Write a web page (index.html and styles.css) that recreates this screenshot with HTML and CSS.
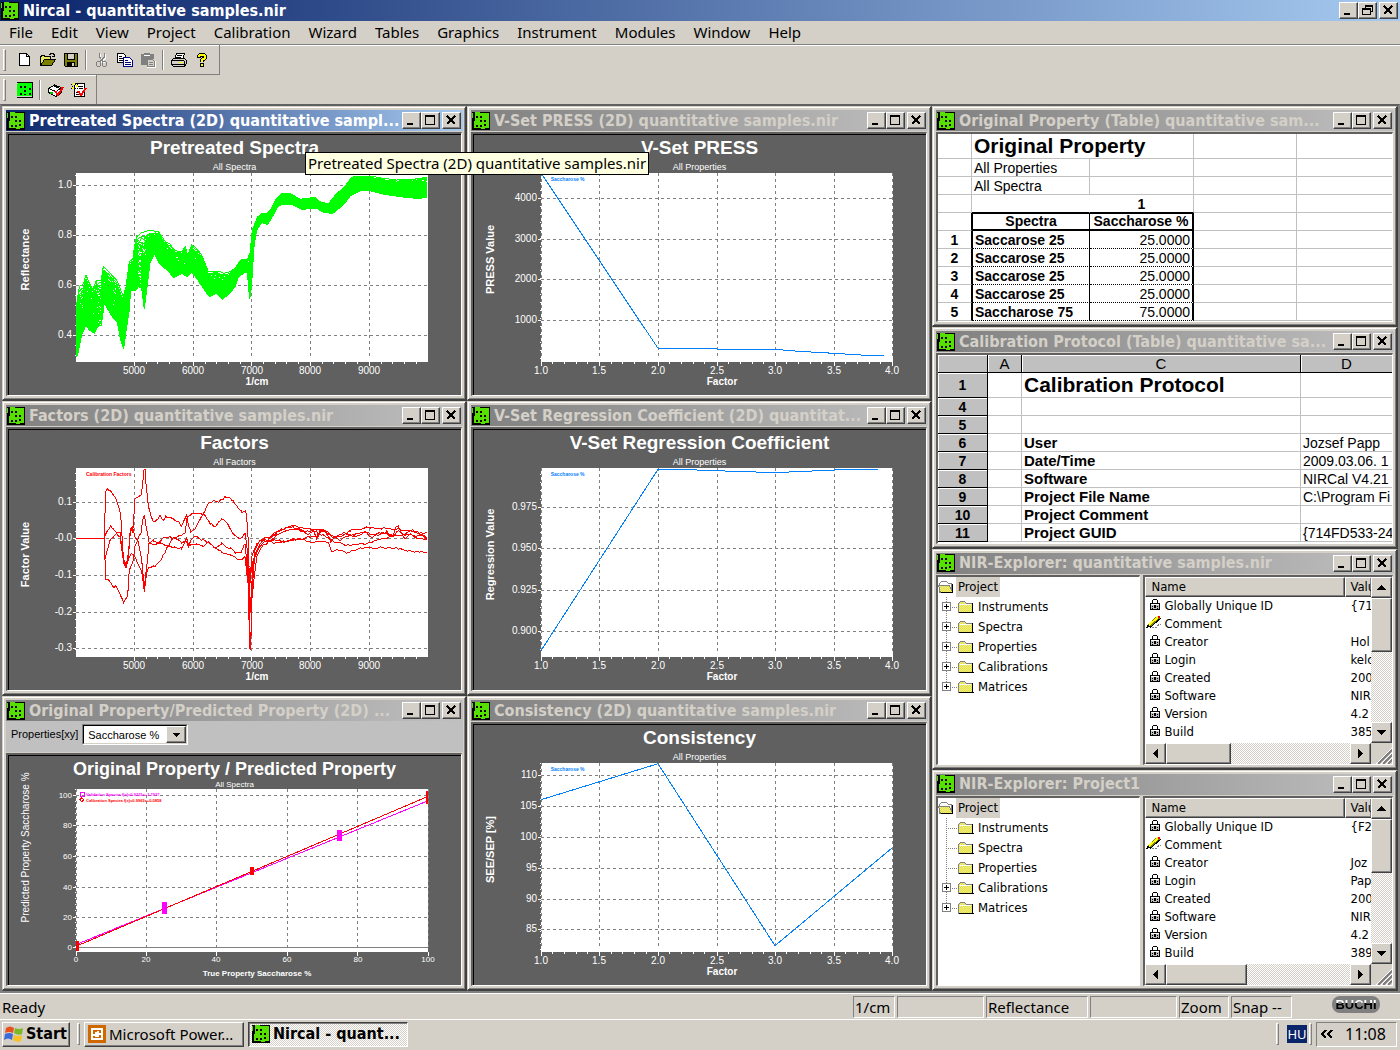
FILE: index.html
```html
<!DOCTYPE html>
<html lang="en">
<head>
<meta charset="utf-8">
<title>Nircal - quantitative samples.nir</title>
<link rel="stylesheet" href="styles.css">
</head>
<body>
<svg class="defs" aria-hidden="true">
  <defs>
    <pattern id="dither" width="2" height="2" patternUnits="userSpaceOnUse"><rect width="2" height="2" fill="#ffff00"/><rect width="1" height="1" fill="#d4d0c8"/><rect x="1" y="1" width="1" height="1" fill="#d4d0c8"/></pattern>
    <pattern id="ditheralt" width="2" height="2" patternUnits="userSpaceOnUse"><rect width="2" height="2" fill="#d4d0c8"/><rect width="1" height="1" fill="#ffff00"/><rect x="1" y="1" width="1" height="1" fill="#ffff00"/></pattern>
  </defs>
  <symbol id="app" viewBox="0 0 18 18"><path fill="#000" d="M0 0h18v18H0z"/><path fill="#55e000" d="M3 0h5v1h9v15h-4v1H9v-1H2V9h1z M0 1h1v5H0z"/><path fill="#000" d="M4 4h2v2H4zM8 4h2v2H8zM8 8h2v2H8zM12 8h2v2h-2zM4 13h2v2H4zM8 13h2v2H8zM12 12h2v2h-2z"/></symbol>
  <symbol id="chip" viewBox="0 0 16 16"><path fill="#000" d="M0 0h16v1H0zM0 15h16v1H0zM15 1h1v14h-1z"/><path fill="#00ff00" d="M1 1h14v13H0V2h1z"/><path fill="#000" d="M3 4h2v2H3zM7 4h2v2H7zM7 8h2v2H7zM12 6h2v2h-2zM3 11h2v2H3zM7 12h2v1H7zM12 11h2v2h-2z"/></symbol>
  <symbol id="new" viewBox="0 0 16 16"><path fill="#fff" stroke="#000" d="M2.500 1.500h7l3 3v9h-10z"/><path fill="none" stroke="#000" d="M9.500 1.500v3h3"/></symbol>
  <symbol id="open" viewBox="0 0 16 16"><path fill="url(#dither)" stroke="#000" d="M.5 13.500v-9h1v-1h3v1h6v3h-6z"/><path fill="#808000" stroke="#000" d="M.5 13.500l4-6h11l-4 6z"/><path fill="none" stroke="#000" d="M9 2.500h1v-1h3v1h1v2M12 4.500h3"/></symbol>
  <symbol id="save" viewBox="0 0 16 16"><path fill="#808000" stroke="#000" d="M1.500 1.500h13v13h-12l-1-1z"/><path fill="#d4d0c8" stroke="#000" d="M4.500 1.500h7v6h-7z"/><path fill="#000" d="M4 10h8v5H4z"/><path fill="#d4d0c8" d="M9 11h2v3H9z"/></symbol>
  <symbol id="cut" viewBox="0 0 16 16"><g fill="none"><path stroke="#fff" d="M6.500 2v4l4 5M11.500 2v4l-5 5"/><path stroke="#808080" d="M5.500 1v4l4 5M10.500 1v4l-5 5"/><ellipse cx="4.500" cy="12" rx="2" ry="2.500" stroke="#808080"/><ellipse cx="10.500" cy="12" rx="2" ry="2.500" stroke="#808080"/></g></symbol>
  <symbol id="copy" viewBox="0 0 16 16"><path fill="#fff" stroke="#000" d="M.5 1.500h6l2 2v7h-8z"/><path stroke="#000" d="M2 4.500h3M2 6.500h4M2 8.500h4"/><path fill="#fff" stroke="#000080" d="M6.500 5.500h6l3 3v6h-9z"/><path stroke="#000080" d="M8 8.500h3M8 10.500h6M8 12.500h6"/></symbol>
  <symbol id="paste" viewBox="0 0 16 16"><path fill="#808080" d="M1 2h3V1h6v1h4v5h-1v6H1z"/><path stroke="#fff" d="M4 3.500h6"/><path fill="#d4d0c8" stroke="#808080" d="M7.500 7.500h5l2 2v5h-7z"/><path stroke="#808080" d="M9 10.500h4M9 12.500h4"/><path fill="none" stroke="#fff" d="M7 15.500h8.500V9"/></symbol>
  <symbol id="print" viewBox="0 0 16 16"><path fill="#fff" stroke="#000" d="M5.500 1.500h8l-2 6h-8z"/><path stroke="#000" d="M6 3.500h5M5 5.500h5"/><path fill="#d4d0c8" stroke="#000" d="M.5 8.500l2-2h11l2 2v3l-2 3H2.500l-2-2z"/><path stroke="#000" d="M1 8.500h12M1 12.500h12M13.500 9v5"/><path fill="#ffff00" d="M8 10h4v1H8z"/></symbol>
  <symbol id="help" viewBox="0 0 16 16"><path fill="none" stroke="#000" stroke-width="4" d="M5 6V4l1-1h4l1 1v2L8 8v2"/><path fill="#000" d="M6 11h4v4H6z"/><path fill="none" stroke="#ffff00" stroke-width="2" d="M5 5V4l1-1h4l1 1v2L8 8v2"/><path fill="#ffff00" d="M7 12h2v2H7z"/></symbol>
  <symbol id="boxcheck" viewBox="0 0 16 16"><path fill="#fff" stroke="#000" d="M.5 6.500L6.500 3l7 2.500v5L8 14.500l-7.500-4z"/><path fill="none" stroke="#000" d="M.5 6.500L8 9.500l5.500-4M8 9.500v5M6 4l6 2.500"/><path fill="#00c000" d="M2 10h3v2H2z"/><path fill="none" stroke="#ff0000" stroke-width="2" d="M7 9l3 4 5-8"/></symbol>
  <symbol id="formcheck" viewBox="0 0 16 16"><path fill="#fff" stroke="#000" d="M3.500 1.500h10v13h-10z"/><path stroke="#000" d="M8 4.500h4M8 6.500h4M5 10.500h3M5 12.500h4"/><path stroke="#000" stroke-dasharray="1 1" d="M0 2.500h8M1 4.500h7M0 6.500h8"/><path fill="#ffff00" d="M2 1h2v2H2zM5 3h2v2H5zM1 5h2v2H1z"/><path fill="none" stroke="#ff0000" stroke-width="2" d="M7 9l3 4 5-7"/></symbol>
  <symbol id="min" viewBox="0 0 15 13"><path fill="#000" d="M3 9h6v2H3z"/></symbol>
  <symbol id="max" viewBox="0 0 15 13"><path fill="#000" fill-rule="evenodd" d="M2 1h10v10H2zM3 3h8v7H3z"/></symbol>
  <symbol id="restore" viewBox="0 0 15 13"><path fill="#000" fill-rule="evenodd" d="M5 1h8v7h-2v3H2V4h3zM6 3v1h5v3h1V3zM3 6h7v4H3z"/></symbol>
  <symbol id="close" viewBox="0 0 15 13"><path fill="none" stroke="#000" stroke-width="2" d="M3 2l8 8M11 2l-8 8"/></symbol>
  <symbol id="folder" viewBox="0 0 16 14"><path fill="url(#dither)" stroke="#808080" d="M.5 12.500v-9l2-2h4l2 2h6v9z"/><path fill="none" stroke="#000" d="M1 12.500h14.500M14.500 3v9.500"/><path stroke="#fff" d="M2 4.500h11"/></symbol>
  <symbol id="folderopen" viewBox="0 0 16 14"><path fill="#fff" stroke="#808080" d="M1.500 12.500v-9l2-2h5l2 2h3v9z"/><path fill="url(#ditheralt)" stroke="#808080" d="M.5 5.500h11l3 7h-12z"/><path fill="none" stroke="#000" d="M3 12.500h12M14.500 4v9"/></symbol>
  <symbol id="lock" viewBox="0 0 12 13"><path fill="none" stroke="#000" d="M3.500 6V2.500l1-1h3l1 1V6"/><path fill="#c0c0c0" stroke="#000" d="M1.500 5.500h9v6h-9z"/><path stroke="#fff" d="M2 6.500h8"/><path fill="#000" d="M5 7h2v3H5zM3 8h1v1H3zM8 8h1v1H8zM3 10h1v1H3zM8 10h1v1H8z"/></symbol>
  <symbol id="pencil" viewBox="0 0 16 14"><path stroke="#808000" stroke-width="4" d="M3 11l10-9"/><path stroke="#ffff00" stroke-width="2" d="M3 10l9-8"/><path stroke="#000" d="M4 12.500L15 3"/><path fill="#ff0000" d="M12 1h2v2h-2z"/><path fill="#000" d="M0 13l2-4 2 3z"/><path fill="none" stroke="#808080" stroke-dasharray="2 1" d="M6 12.500h4l3-3h2"/></symbol>
  <symbol id="plus" viewBox="0 0 9 9"><path fill="#fff" stroke="#808080" d="M.5.5h8v8h-8z"/><path stroke="#000" d="M2 4.500h5M4.500 2v5"/></symbol>
  <symbol id="up" viewBox="0 0 9 5"><path d="M0 5h9L4.500 0z"/></symbol>
  <symbol id="down" viewBox="0 0 9 5"><path d="M0 0h9L4.500 5z"/></symbol>
  <symbol id="left" viewBox="0 0 5 9"><path d="M5 0v9L0 4.500z"/></symbol>
  <symbol id="right" viewBox="0 0 5 9"><path d="M0 0v9l5-4.500z"/></symbol>
  <symbol id="grip" viewBox="0 0 19 19"><g fill="none"><path stroke="#808080" stroke-width="2" d="M5 19L19 5M10 19l9-9M15 19l4-4"/><path stroke="#fff" d="M3 19L19 3M8 19L19 8M13 19l6-6"/></g></symbol>
</svg>

<header class="titlebar active main-title">
  <svg class="app-icon"><use href="#app"/></svg><h1 class="caption">Nircal - quantitative samples.nir</h1>
  <button class="wbtn" aria-label="Minimize"><svg><use href="#min"/></svg></button><button class="wbtn" aria-label="Restore"><svg><use href="#restore"/></svg></button><button class="wbtn close" aria-label="Close"><svg><use href="#close"/></svg></button>
</header>

<nav class="menu">
  <button>File</button><button>Edit</button><button>View</button><button>Project</button><button>Calibration</button><button>Wizard</button><button>Tables</button><button>Graphics</button><button>Instrument</button><button>Modules</button><button>Window</button><button>Help</button>
</nav>

<div class="toolbar">
  <i class="handle"></i>
  <button aria-label="New"><svg><use href="#new"/></svg></button><button aria-label="Open"><svg><use href="#open"/></svg></button><button aria-label="Save"><svg><use href="#save"/></svg></button>
  <i class="sep"></i>
  <button aria-label="Cut"><svg><use href="#cut"/></svg></button><button aria-label="Copy"><svg><use href="#copy"/></svg></button><button aria-label="Paste"><svg><use href="#paste"/></svg></button>
  <i class="sep"></i>
  <button aria-label="Print"><svg><use href="#print"/></svg></button><button aria-label="Help"><svg><use href="#help"/></svg></button>
</div>
<div class="toolbar second">
  <i class="handle"></i>
  <button aria-label="Project"><svg><use href="#chip"/></svg></button>
  <i class="sep"></i>
  <button aria-label="Check instrument"><svg><use href="#boxcheck"/></svg></button><button aria-label="Check form"><svg><use href="#formcheck"/></svg></button>
</div>

<main class="mdi">
  <div class="column">
    <section class="window">
      <header class="titlebar active"><svg class="app-icon"><use href="#app"/></svg><h2 class="caption">Pretreated Spectra (2D) quantitative sampl...</h2><button class="wbtn" aria-label="Minimize"><svg><use href="#min"/></svg></button><button class="wbtn" aria-label="Maximize"><svg><use href="#max"/></svg></button><button class="wbtn close" aria-label="Close"><svg><use href="#close"/></svg></button></header>
      <div class="client chart" data-chart="spectra"></div>
    </section>
    <section class="window">
      <header class="titlebar"><svg class="app-icon"><use href="#app"/></svg><h2 class="caption">Factors (2D) quantitative samples.nir</h2><button class="wbtn" aria-label="Minimize"><svg><use href="#min"/></svg></button><button class="wbtn" aria-label="Maximize"><svg><use href="#max"/></svg></button><button class="wbtn close" aria-label="Close"><svg><use href="#close"/></svg></button></header>
      <div class="client chart" data-chart="factors"></div>
    </section>
    <section class="window">
      <header class="titlebar"><svg class="app-icon"><use href="#app"/></svg><h2 class="caption">Original Property/Predicted Property (2D) ...</h2><button class="wbtn" aria-label="Minimize"><svg><use href="#min"/></svg></button><button class="wbtn" aria-label="Maximize"><svg><use href="#max"/></svg></button><button class="wbtn close" aria-label="Close"><svg><use href="#close"/></svg></button></header>
      <div class="options"><label for="prop">Properties[xy]</label><span class="combo"><select id="prop"><option>Saccharose %</option></select><span class="arrow"><svg><use href="#down"/></svg></span></span></div>
      <div class="client chart" data-chart="predicted"></div>
    </section>
  </div>

  <div class="column">
    <section class="window">
      <header class="titlebar"><svg class="app-icon"><use href="#app"/></svg><h2 class="caption">V-Set PRESS (2D) quantitative samples.nir</h2><button class="wbtn" aria-label="Minimize"><svg><use href="#min"/></svg></button><button class="wbtn" aria-label="Maximize"><svg><use href="#max"/></svg></button><button class="wbtn close" aria-label="Close"><svg><use href="#close"/></svg></button></header>
      <div class="client chart" data-chart="press"></div>
    </section>
    <section class="window">
      <header class="titlebar"><svg class="app-icon"><use href="#app"/></svg><h2 class="caption">V-Set Regression Coefficient (2D) quantitat...</h2><button class="wbtn" aria-label="Minimize"><svg><use href="#min"/></svg></button><button class="wbtn" aria-label="Maximize"><svg><use href="#max"/></svg></button><button class="wbtn close" aria-label="Close"><svg><use href="#close"/></svg></button></header>
      <div class="client chart" data-chart="regression"></div>
    </section>
    <section class="window">
      <header class="titlebar"><svg class="app-icon"><use href="#app"/></svg><h2 class="caption">Consistency (2D) quantitative samples.nir</h2><button class="wbtn" aria-label="Minimize"><svg><use href="#min"/></svg></button><button class="wbtn" aria-label="Maximize"><svg><use href="#max"/></svg></button><button class="wbtn close" aria-label="Close"><svg><use href="#close"/></svg></button></header>
      <div class="client chart" data-chart="consistency"></div>
    </section>
  </div>

  <div class="column">
    <section class="window">
      <header class="titlebar"><svg class="app-icon"><use href="#app"/></svg><h2 class="caption">Original Property (Table) quantitative sam...</h2><button class="wbtn" aria-label="Minimize"><svg><use href="#min"/></svg></button><button class="wbtn" aria-label="Maximize"><svg><use href="#max"/></svg></button><button class="wbtn close" aria-label="Close"><svg><use href="#close"/></svg></button></header>
      <div class="client">
        <table class="sheet props">
          <colgroup><col class="c-idx"><col class="c-name"><col class="c-val"><col class="c-extra"><col></colgroup>
          <tr class="big"><td></td><th colspan="2">Original Property</th><td></td><td></td></tr>
          <tr><td></td><td>All Properties</td><td></td><td></td><td></td></tr>
          <tr><td></td><td>All Spectra</td><td></td><td></td><td></td></tr>
          <tr class="above"><td></td><td class="open"></td><th class="mid">1</th><td></td><td></td></tr>
          <tr class="head"><td class="idx"></td><th>Spectra</th><th>Saccharose %</th><td></td><td></td></tr>
          <tr class="data"><th class="idx">1</th><th>Saccarose 25</th><td>25.0000</td><td></td><td></td></tr>
          <tr class="data"><th class="idx">2</th><th>Saccarose 25</th><td>25.0000</td><td></td><td></td></tr>
          <tr class="data"><th class="idx">3</th><th>Saccarose 25</th><td>25.0000</td><td></td><td></td></tr>
          <tr class="data"><th class="idx">4</th><th>Saccarose 25</th><td>25.0000</td><td></td><td></td></tr>
          <tr class="data"><th class="idx">5</th><th>Saccharose 75</th><td>75.0000</td><td></td><td></td></tr>
        </table>
      </div>
    </section>
    <section class="window">
      <header class="titlebar"><svg class="app-icon"><use href="#app"/></svg><h2 class="caption">Calibration Protocol (Table) quantitative sa...</h2><button class="wbtn" aria-label="Minimize"><svg><use href="#min"/></svg></button><button class="wbtn" aria-label="Maximize"><svg><use href="#max"/></svg></button><button class="wbtn close" aria-label="Close"><svg><use href="#close"/></svg></button></header>
      <div class="client">
        <table class="sheet protocol">
          <colgroup><col class="c-row"><col class="c-a"><col class="c-c"><col></colgroup>
          <tr><th class="hd"></th><th class="hd">A</th><th class="hd">C</th><th class="hd last">D</th></tr>
          <tr class="big"><th class="hd">1</th><td></td><th>Calibration Protocol</th><td></td></tr>
          <tr><th class="hd">4</th><td></td><th></th><td></td></tr>
          <tr><th class="hd">5</th><td></td><th></th><td></td></tr>
          <tr><th class="hd">6</th><td></td><th>User</th><td>Jozsef Papp</td></tr>
          <tr><th class="hd">7</th><td></td><th>Date/Time</th><td>2009.03.06. 1</td></tr>
          <tr><th class="hd">8</th><td></td><th>Software</th><td>NIRCal V4.21</td></tr>
          <tr><th class="hd">9</th><td></td><th>Project File Name</th><td>C:\Program Fi</td></tr>
          <tr><th class="hd">10</th><td></td><th>Project Comment</th><td></td></tr>
          <tr><th class="hd">11</th><td></td><th>Project GUID</th><td>{714FD533-24</td></tr>
        </table>
      </div>
    </section>
    <section class="window">
      <header class="titlebar"><svg class="app-icon"><use href="#app"/></svg><h2 class="caption">NIR-Explorer: quantitative samples.nir</h2><button class="wbtn" aria-label="Minimize"><svg><use href="#min"/></svg></button><button class="wbtn" aria-label="Maximize"><svg><use href="#max"/></svg></button><button class="wbtn close" aria-label="Close"><svg><use href="#close"/></svg></button></header>
      <div class="explorer">
        <ul class="tree">
          <li class="root"><svg class="folder"><use href="#folderopen"/></svg><span class="selected">Project</span></li>
          <li><i class="stem"><svg class="plus"><use href="#plus"/></svg></i><svg class="folder"><use href="#folder"/></svg><span>Instruments</span></li>
          <li><i class="stem"><svg class="plus"><use href="#plus"/></svg></i><svg class="folder"><use href="#folder"/></svg><span>Spectra</span></li>
          <li><i class="stem"><svg class="plus"><use href="#plus"/></svg></i><svg class="folder"><use href="#folder"/></svg><span>Properties</span></li>
          <li><i class="stem"><svg class="plus"><use href="#plus"/></svg></i><svg class="folder"><use href="#folder"/></svg><span>Calibrations</span></li>
          <li><i class="stem"><svg class="plus"><use href="#plus"/></svg></i><svg class="folder"><use href="#folder"/></svg><span>Matrices</span></li>
        </ul>
        <div class="listview">
          <div class="listbody"><table class="list">
            <colgroup><col class="c-prop"><col></colgroup>
            <tr><th>Name</th><th>Valu</th></tr>
            <tr><td><svg class="lock"><use href="#lock"/></svg>Globally Unique ID</td><td>{71</td></tr>
            <tr><td><svg class="pencil"><use href="#pencil"/></svg>Comment</td><td></td></tr>
            <tr><td><svg class="lock"><use href="#lock"/></svg>Creator</td><td>Hol</td></tr>
            <tr><td><svg class="lock"><use href="#lock"/></svg>Login</td><td>kelc</td></tr>
            <tr><td><svg class="lock"><use href="#lock"/></svg>Created</td><td>200</td></tr>
            <tr><td><svg class="lock"><use href="#lock"/></svg>Software</td><td>NIR</td></tr>
            <tr><td><svg class="lock"><use href="#lock"/></svg>Version</td><td>4.2</td></tr>
            <tr><td><svg class="lock"><use href="#lock"/></svg>Build</td><td>385</td></tr>
          </table></div>
          <div class="vscroll"><button class="sbtn" aria-label="Scroll up"><svg class="tri"><use href="#up"/></svg></button><i class="thumb"></i><button class="sbtn end" aria-label="Scroll down"><svg class="tri"><use href="#down"/></svg></button></div>
          <div class="hscroll"><button class="sbtn" aria-label="Scroll left"><svg class="tri side"><use href="#left"/></svg></button><i class="thumb"></i><button class="sbtn end" aria-label="Scroll right"><svg class="tri side"><use href="#right"/></svg></button></div>
          <svg class="grip"><use href="#grip"/></svg>
        </div>
      </div>
    </section>
    <section class="window">
      <header class="titlebar"><svg class="app-icon"><use href="#app"/></svg><h2 class="caption">NIR-Explorer: Project1</h2><button class="wbtn" aria-label="Minimize"><svg><use href="#min"/></svg></button><button class="wbtn" aria-label="Maximize"><svg><use href="#max"/></svg></button><button class="wbtn close" aria-label="Close"><svg><use href="#close"/></svg></button></header>
      <div class="explorer">
        <ul class="tree">
          <li class="root"><svg class="folder"><use href="#folderopen"/></svg><span class="selected">Project</span></li>
          <li><i class="stem leaf"></i><svg class="folder"><use href="#folder"/></svg><span>Instruments</span></li>
          <li><i class="stem leaf"></i><svg class="folder"><use href="#folder"/></svg><span>Spectra</span></li>
          <li><i class="stem leaf"></i><svg class="folder"><use href="#folder"/></svg><span>Properties</span></li>
          <li><i class="stem"><svg class="plus"><use href="#plus"/></svg></i><svg class="folder"><use href="#folder"/></svg><span>Calibrations</span></li>
          <li><i class="stem"><svg class="plus"><use href="#plus"/></svg></i><svg class="folder"><use href="#folder"/></svg><span>Matrices</span></li>
        </ul>
        <div class="listview">
          <div class="listbody"><table class="list">
            <colgroup><col class="c-prop"><col></colgroup>
            <tr><th>Name</th><th>Valu</th></tr>
            <tr><td><svg class="lock"><use href="#lock"/></svg>Globally Unique ID</td><td>{F2</td></tr>
            <tr><td><svg class="pencil"><use href="#pencil"/></svg>Comment</td><td></td></tr>
            <tr><td><svg class="lock"><use href="#lock"/></svg>Creator</td><td>Joz</td></tr>
            <tr><td><svg class="lock"><use href="#lock"/></svg>Login</td><td>Pap</td></tr>
            <tr><td><svg class="lock"><use href="#lock"/></svg>Created</td><td>200</td></tr>
            <tr><td><svg class="lock"><use href="#lock"/></svg>Software</td><td>NIR</td></tr>
            <tr><td><svg class="lock"><use href="#lock"/></svg>Version</td><td>4.2</td></tr>
            <tr><td><svg class="lock"><use href="#lock"/></svg>Build</td><td>389</td></tr>
          </table></div>
          <div class="vscroll"><button class="sbtn" aria-label="Scroll up"><svg class="tri"><use href="#up"/></svg></button><i class="thumb"></i><button class="sbtn end" aria-label="Scroll down"><svg class="tri"><use href="#down"/></svg></button></div>
          <div class="hscroll"><button class="sbtn" aria-label="Scroll left"><svg class="tri side"><use href="#left"/></svg></button><i class="thumb wide"></i><button class="sbtn end" aria-label="Scroll right"><svg class="tri side"><use href="#right"/></svg></button></div>
          <svg class="grip"><use href="#grip"/></svg>
        </div>
      </div>
    </section>
  </div>
  <div class="tooltip" role="tooltip">Pretreated Spectra (2D) quantitative samples.nir</div>
</main>

<div class="status">
  <span class="ready">Ready</span>
  <span class="cell w-unit">1/cm</span><span class="cell w-blank"></span><span class="cell w-mode">Reflectance</span><span class="cell w-blank"></span><span class="cell w-zoom">Zoom</span><span class="cell w-snap">Snap --</span>
  <span class="brand"><b>BUCHI</b></span>
</div>

<footer class="taskbar">
  <button class="start"><svg class="flag" viewBox="0 0 20 20"><path fill="#e8501c" d="M2 4q4-3 8 0L9 9Q5 7 1 9z"/><path fill="#7ab828" d="M11 4q4 2 8 0l-1 6q-4 2-8-1z"/><path fill="#3c6cd8" d="M1 10q4-2 8 0l-1 6q-4-3-8 0z"/><path fill="#f8c020" d="M10 11q4 2 8 0l-1 6q-4 2-8-1z"/></svg>Start</button>
  <i class="divider"></i>
  <button class="task"><svg class="task-icon" viewBox="0 0 18 18"><path fill="#d06800" d="M0 0h18v18H0z"/><path fill="none" stroke="#fff" stroke-width="2" d="M4 4h10v10H4z"/><path fill="#fff" d="M9 6h2v2h2v2h-2v2H7v-1H5V9h2V7h2z"/></svg>Microsoft Power...</button>
  <button class="task pressed"><svg class="task-icon"><use href="#app"/></svg>Nircal - quant...</button>
  <span class="spring"></span>
  <i class="divider"></i>
  <span class="lang">HU</span>
  <i class="divider"></i>
  <div class="tray"><svg class="chevrons" viewBox="0 0 12 8"><path fill="none" stroke="#000" stroke-width="2" d="M5 0L1 4l4 4M11 0L7 4l4 4"/></svg><time>11:08</time></div>
</footer>
<script src="charts.js"></script>
</body>
</html>
```
FILE: styles.css
```css
* { box-sizing: border-box; }
html, body { height: 100%; }
body { margin: 0; display: flex; flex-direction: column; overflow: hidden; background: #d4d0c8; color: #000; font: 15px/20px "Noto Sans", sans-serif; }
button { margin: 0; padding: 0; border: 0; background: none; color: inherit; font: inherit; }
svg { display: block; flex: none; shape-rendering: crispEdges; }
.defs { position: absolute; width: 0; height: 0; }

/* caption bars */
.titlebar { display: flex; align-items: center; flex: none; height: 21px; padding: 0 2px 0 1px; background: linear-gradient(90deg, #808080, #c0c0c0); color: #d4d0c8; }
.titlebar.active { background: linear-gradient(90deg, #0a246a, #a6caf0); color: #fff; }
.app-icon { width: 18px; height: 18px; }
.caption { flex: 1; min-width: 0; margin: 0 0 0 4px; overflow: hidden; white-space: nowrap; font: bold 16px/22px "DejaVu Sans Condensed", "DejaVu Sans", sans-serif; }
.wbtn { width: 19px; height: 17px; flex: none; background: #d4d0c8; border: 1px solid; border-color: #fff #404040 #404040 #fff; box-shadow: inset -1px -1px #808080; }
.wbtn svg { width: 15px; height: 13px; margin: 1px; }
.wbtn.close { margin-left: 2px; }

.menu { display: flex; flex: none; height: 23px; box-shadow: 0 1px #808080, 0 2px #fff; }
.menu button { padding: 0 9px; line-height: 20px; height: 21px; }

.toolbar { display: flex; align-items: center; align-self: flex-start; flex: none; height: 31px; padding: 0 6px 0 3px; border: solid #808080; border-width: 1px 1px 1px 0; box-shadow: inset 0 1px #fff; }
.toolbar.second { height: 29px; border-width: 0 1px 0 0; }
.toolbar button { width: 23px; height: 22px; display: grid; place-items: center; }
.toolbar svg { width: 16px; height: 16px; }
.handle { width: 3px; height: 22px; margin-right: 7px; background: #d4d0c8; border: 1px solid; border-color: #fff #808080 #808080 #fff; }
.sep { width: 2px; height: 20px; margin: 0 3px; border-left: 1px solid #808080; border-right: 1px solid #fff; }

/* child windows */
.mdi { position: relative; flex: 1; min-height: 0; display: grid; grid-template-columns: 465fr 465fr 466fr; border: 2px solid #808080; border-top-color: #606060; background: #808080; }
.column { display: flex; flex-direction: column; min-width: 0; min-height: 0; }
.window { flex: 1 1 0; min-height: 0; display: flex; flex-direction: column; padding: 3px 2px 2px 3px; background: #d4d0c8; border: 1px solid; border-color: #d4d0c8 #404040 #404040 #d4d0c8; border-right-width: 2px; border-bottom-width: 2px; box-shadow: inset 1px 1px #fff, inset -1px -1px #808080; }
.client { flex: 1; min-height: 0; margin: 1px 1px 1px 0; overflow: hidden; background: #fff; border: solid; border-width: 2px 1px 1px 2px; border-color: #606060 #fff #fff #606060; }
.chart { background: #606060; box-shadow: inset 1px 1px #000; }
.chart svg { width: 100%; height: 100%; }
.chart text { font-family: "Liberation Sans", Arial, sans-serif; fill: #fff; }

.options { display: flex; align-items: flex-start; flex: none; height: 31px; gap: 4px; padding: 3px 5px 0; background: #c0c0c0; font: 11px/20px "Liberation Sans", Arial, sans-serif; }
.combo { position: relative; display: flex; width: 106px; height: 21px; border: 1px solid; border-color: #808080 #fff #fff #808080; }
.combo select { appearance: none; width: 100%; padding: 0 0 0 4px; border: 1px solid; border-color: #000 #d4d0c8 #d4d0c8 #000; border-radius: 0; background: #fff; color: #000; font: 11px/16px "Liberation Sans", Arial, sans-serif; }
.arrow { position: absolute; top: 1px; right: 1px; bottom: 1px; width: 20px; display: grid; place-items: center; pointer-events: none; background: #d4d0c8; border: 1px solid; border-color: #fff #404040 #404040 #fff; box-shadow: inset -1px -1px #808080; }
.arrow svg { width: 7px; height: 4px; }

/* spreadsheets */
.sheet { width: 100%; table-layout: fixed; border-collapse: separate; border-spacing: 0; font: 14px/16px "Liberation Sans", Arial, sans-serif; }
.sheet td, .sheet th { height: 18px; padding: 0 2px; overflow: hidden; white-space: nowrap; text-align: left; border: solid #c0c0c0; border-width: 0 1px 1px 0; }
.protocol th { font-size: 15px; }
.sheet .big td, .sheet .big th { height: 25px; }
.sheet .big th:not(.hd) { font-size: 21px; line-height: 24px; }
.sheet tr > :last-child { border-right-width: 0; }
.c-idx { width: 34px; }
.c-name { width: 118px; }
.c-val { width: 104px; }
.c-extra { width: 103px; }
.c-row { width: 50px; }
.c-a { width: 34px; }
.c-c { width: 279px; }
.sheet .open { border-right-color: transparent; }
.sheet .mid, .sheet .idx, .sheet .head th { text-align: center; }
.props .above td:nth-child(2), .props .above th { border-bottom-color: #000; }
.props .idx { border-right-color: #000; }
.props .head th, .props .data th:nth-child(2) { border-color: #000; border-left-width: 1px; }
.props .head th { border-top-width: 1px; border-bottom-width: 2px; line-height: 15px; }
.props .head th:nth-child(3), .props .data td:nth-child(3) { border-left-width: 0; border-right: 2px solid #000; }
.props .data td:nth-child(3) { text-align: right; border-bottom: 1px dotted #000; }
.props .data th:nth-child(2) { border-bottom-style: dotted; }
.sheet .hd { background: #c0c0c0; text-align: center; border-color: #000; box-shadow: inset 1px 1px #fff; font-weight: normal; }
.sheet .hd:first-child { font-weight: bold; font-size: 14px; }

/* explorer */
.explorer { flex: 1; min-height: 0; display: grid; grid-template-columns: 204fr 249fr; gap: 3px; margin: 1px 1px 1px 0; font: 13px/17px "DejaVu Sans Condensed", "DejaVu Sans", sans-serif; }
.tree, .listview { min-width: 0; min-height: 0; margin: 0; overflow: hidden; background: #fff; border: solid; border-width: 2px 1px 1px 2px; border-color: #606060 #fff #fff #606060; }
.tree { padding: 0; list-style: none; }
.tree li { display: flex; align-items: center; height: 20px; }
.tree li span { padding: 0 2px; margin-left: 2px; line-height: 20px; }
.tree .selected { background: #d4d0c8; }
.folder { width: 16px; height: 14px; }
.stem { display: grid; align-items: center; align-self: stretch; width: 15px; margin-left: 4px; margin-right: 1px; background: repeating-linear-gradient(#808080 0 1px, transparent 1px 2px) 4px 0 / 1px 100% no-repeat, repeating-linear-gradient(90deg, #808080 0 1px, transparent 1px 2px) 4px 10px / 100% 1px no-repeat; }
.tree li:last-child .stem { background-size: 1px 10px, 100% 1px; }
.plus { width: 9px; height: 9px; }
.listview { display: grid; grid-template: 1fr 21px / 1fr 21px; background: #d4d0c8; }
.listbody { min-width: 0; min-height: 0; overflow: hidden; background: #fff; }
.list { width: 100%; table-layout: fixed; border-collapse: separate; border-spacing: 0; }
.c-prop { width: 200px; }
.list th { height: 20px; padding: 0 5px; text-align: left; font-weight: normal; overflow: hidden; background: #d4d0c8; border: 1px solid; border-color: #fff #404040 #404040 #fff; box-shadow: inset -1px -1px #808080; }
.list th:last-child { padding: 0 0 0 4px; border-right: 0; }
.list td { height: 18px; padding: 0; overflow: hidden; white-space: nowrap; }
.list td:last-child { padding-left: 5px; }
.list td svg { display: inline-block; vertical-align: -1px; }
.lock { width: 12px; height: 13px; margin: 0 3px 0 4px; }
.pencil { width: 16px; height: 14px; margin: 0 2px 0 1px; }
.vscroll, .hscroll { display: flex; background: repeating-conic-gradient(#fff 0 25%, #d4d0c8 0 50%) 0 0 / 2px 2px; }
.vscroll { flex-direction: column; }
.sbtn, .thumb { flex: none; background: #d4d0c8; border: 1px solid; border-color: #fff #404040 #404040 #fff; box-shadow: inset -1px -1px #808080; }
.sbtn { width: 21px; height: 21px; display: grid; place-items: center; }
.vscroll .end { margin-top: auto; }
.hscroll .end { margin-left: auto; }
.vscroll .thumb { height: 54px; }
.hscroll .thumb { width: 65px; }
.hscroll .thumb.wide { width: 81px; }
.tri { width: 9px; height: 5px; }
.tri.side { width: 5px; height: 9px; }
.grip { width: 19px; height: 19px; align-self: end; justify-self: end; }

.tooltip { position: absolute; left: 303px; top: 46px; height: 23px; padding: 0 2px; border: 1px solid #000; background: #ffffe1; line-height: 21px; white-space: nowrap; }

.status { display: flex; align-items: center; flex: none; height: 27px; gap: 2px; padding-right: 20px; border: solid #fff; border-width: 1px 0; }
.ready { flex: 1; padding-left: 2px; line-height: 26px; }
.cell { height: 22px; padding-left: 1px; line-height: 21px; white-space: nowrap; border: 1px solid; border-color: #808080 #fff #fff #808080; }
.w-unit { width: 42px; }
.w-blank { width: 87px; }
.w-mode { width: 102px; }
.w-zoom { width: 50px; }
.w-snap { width: 61px; }
.brand { width: 48px; height: 17px; margin: 0 0 4px 38px; border-radius: 8px; background: #808080; text-align: center; overflow: hidden; }
.brand b { display: block; font: bold 13px/17px "Liberation Sans", Arial, sans-serif; background: linear-gradient(#fff 0 40%, #000 40%); background-clip: text; color: transparent; }

.taskbar { display: flex; align-items: center; flex: none; height: 30px; padding: 0 3px 2px 2px; }
.taskbar button { display: flex; align-items: center; height: 25px; background: #d4d0c8; border: 1px solid; border-color: #fff #404040 #404040 #fff; box-shadow: inset -1px -1px #808080; white-space: nowrap; }
.taskbar .start { width: 68px; gap: 2px; padding: 0 1px; font: bold 16px/22px "DejaVu Sans Condensed", "DejaVu Sans", sans-serif; }
.flag { width: 20px; height: 20px; shape-rendering: auto; }
.divider { width: 3px; height: 22px; margin: 0 4px 0 7px; border: 1px solid; border-color: #fff #808080 #808080 #fff; }
.taskbar .task { width: 160px; gap: 3px; margin-right: 4px; padding: 0 3px; }
.taskbar .pressed { border-color: #404040 #fff #fff #404040; box-shadow: inset 1px 1px #808080; background: repeating-conic-gradient(#fff 0 25%, #d4d0c8 0 50%) 0 0 / 2px 2px; font: bold 16px/24px "DejaVu Sans Condensed", "DejaVu Sans", sans-serif; }
.task-icon { width: 18px; height: 18px; }
.spring { flex: 1; }
.lang { width: 20px; height: 18px; margin: 0 -5px 0 4px; background: #0a246a; color: #fff; font-size: 13px; line-height: 18px; text-align: center; }
.tray { display: flex; align-items: center; gap: 12px; width: 81px; height: 25px; padding-left: 4px; border: 1px solid; border-color: #808080 #fff #fff #808080; }
.chevrons { width: 12px; height: 8px; }
.tray time { font-size: 16px; }
```
FILE: charts.js
```js
// Every chart is described on a plot grid of `size` units; `origin` is its top left corner.
const factorTicks = [[226, '1.0'], [401, '1.5'], [577, '2.0'], [754, '2.5'], [928, '3.0'], [1105, '3.5'], [1280, '4.0']];
const waveTicks = [[403, '5000'], [580, '6000'], [755, '7000'], [931, '8000'], [1108, '9000']];
const BLUE = '#0080ff', RED = '#ff0000', LIME = '#00ff00', PINK = '#ff00ff';

const upper = '228,540 233,500 238,470 250,462 258,435 266,455 278,480 290,450 304,450 310,410 320,418 335,435 350,450 362,480 370,500 378,470 388,395 400,385 403,350 410,320 425,308 445,302 475,304 485,320 497,335 510,342 525,362 545,365 556,350 563,375 575,345 590,355 605,375 625,425 655,423 672,430 690,425 705,415 722,390 742,388 750,370 757,300 772,262 785,250 800,252 812,240 828,208 845,190 870,190 900,208 945,202 960,215 985,222 1010,190 1030,175 1050,148 1062,138 1110,138 1150,145 1190,150 1240,148 1281,142';
const lower = '228,678 233,675 238,650 245,615 258,585 268,600 283,610 292,590 304,585 313,520 325,540 340,565 352,578 362,630 371,655 380,590 388,540 392,480 405,483 415,470 425,475 433,537 440,480 450,400 463,372 478,400 490,410 510,430 522,442 545,430 562,440 575,425 590,445 610,475 628,500 650,490 668,507 690,490 705,470 715,440 730,430 742,425 749,508 755,460 762,350 770,300 785,278 803,284 820,255 835,228 850,222 880,225 905,238 950,235 970,247 998,250 1030,225 1050,198 1080,182 1110,182 1150,192 1200,200 1250,205 1281,203';

const charts = {
  spectra: {
    title: 'Pretreated Spectra', sub: 'All Spectra', xName: '1/cm', yName: 'Reflectance',
    origin: [228, 129], x: waveTicks, y: [[166, '1.0'], [316, '0.8'], [466, '0.6'], [616, '0.4']], minorX: 35, minorY: 30,
    band: [upper, lower]
  },
  factors: {
    title: 'Factors', sub: 'All Factors', xName: '1/cm', yName: 'Factor Value',
    origin: [228, 204], x: waveTicks, y: [[307, '0.1'], [415, '-0.0'], [526, '-0.1'], [636, '-0.2'], [745, '-0.3']], minorX: 35, minorY: 22,
    legend: [['Calibration Factors', RED, 258, 222]], noise: 3,
    lines: [
      [RED, '228,415 314,415 316,275 322,268 330,272 345,290 355,315 362,345 370,470 378,500 388,440 392,385 398,395 405,300 412,290 423,285 428,250 431,210 435,208 438,250 445,320 455,355 463,365 480,348 490,362 497,350 520,357 535,365 544,380 560,345 565,375 572,395 585,385 610,340 625,310 640,303 655,305 675,292 695,298 715,325 725,335 737,330 743,380 747,500 749,750 752,750 755,600 762,540 770,470 785,440 800,430 820,418 850,425 880,418 900,418 930,412 970,402 1000,424 1040,435 1090,432 1130,420 1180,408 1230,402 1250,415 1281,418'],
      [RED, '314,415 316,540 325,538 332,545 340,560 350,560 360,580 371,610 383,590 388,510 400,480 405,440 415,415 423,395 428,360 433,345 440,390 447,425 460,422 475,430 490,415 510,410 525,415 545,430 560,425 570,435 590,430 610,440 625,425 645,442 665,430 690,445 705,455 725,455 735,430 743,520 749,565 755,470 770,430 785,420 800,425 820,400 845,388 880,382 920,395 950,392 955,410 960,385 985,395 1000,415 1030,400 1060,405 1090,395 1130,405 1160,395 1178,410 1185,385 1195,380 1205,398 1215,405 1235,390 1260,405 1281,412'],
      [RED, '314,480 330,420 350,400 360,410 370,480 378,505 388,470 395,460 405,470 412,490 425,515 433,575 440,520 448,500 465,500 485,475 500,445 520,415 545,405 555,400 562,350 575,340 600,337 615,345 630,370 645,380 665,355 680,370 700,400 722,417 735,400 742,450 748,700 752,750 757,560 765,450 780,420 800,412 820,410 840,390 875,378 910,385 950,390 975,395 1000,408 1020,410 1050,392 1100,382 1150,385 1200,388 1250,397 1281,398'],
      [RED, '314,410 320,395 332,378 345,395 360,400 372,490 383,490 390,400 397,380 404,410 415,425 425,480 433,560 440,500 447,430 465,435 480,430 510,440 545,445 560,410 565,445 575,415 590,408 605,420 620,425 640,440 665,455 690,465 720,480 735,470 745,560 750,640 760,480 780,440 800,420 820,430 850,425 880,420 900,418 930,428 975,422 985,428 995,455 1015,448 1040,458 1080,443 1140,443 1200,445 1240,455 1281,459'],
      [RED, '743,450 748,560 752,520 758,490 770,450 790,420 810,425 830,405 860,392 890,388 910,395 925,402 940,392 950,418 962,395 980,398 992,425 1005,410 1020,420 1040,410 1070,408 1095,395 1115,412 1135,398 1160,402 1178,412 1195,392 1215,415 1230,400 1245,408 1265,408 1281,420']
    ]
  },
  predicted: {
    title: 'Original Property / Predicted Property', sub: 'All Spectra', xName: 'True Property Saccharose %', yName: 'Predicted Property Saccharose %',
    origin: [228, 285], size: [1055, 485], compact: true,
    x: [[228, '0'], [439, '20'], [649, '40'], [861, '60'], [1073, '80'], [1283, '100']],
    y: [[304, '100'], [395, '80'], [487, '60'], [577, '40'], [667, '20'], [757, '0']], minorX: 0, minorY: 18, zero: 757,
    legend: [['Validation Spectra f(x)=0.9331x+1.7937', PINK, 258, 301], ['Calibration Spectra f(x)=0.9963x+0.0858', RED, 258, 317]],
    lines: [[PINK, '230,747 1283,320'], [RED, '230,752 1283,307']],
    marks: [[PINK, 486, 622, 15, 34], [PINK, 1011, 408, 15, 33], [RED, 750, 516, 11, 25], [RED, 1277, 290, 6, 40], [RED, 228, 737, 8, 30]]
  },
  press: {
    title: 'V-Set PRESS', sub: 'All Properties', xName: 'Factor', yName: 'PRESS Value',
    origin: [226, 219], x: factorTicks, y: [[295, '4000'], [418, '3000'], [538, '2000'], [661, '1000']], minorX: 35, minorY: 24,
    legend: [['Saccharose %', BLUE, 255, 238]], lines: [[BLUE, '226,219 577,745 752,745 754,748 928,748 1000,754 1104,760 1200,766 1254,767']]
  },
  regression: {
    title: 'V-Set Regression Coefficient', sub: 'All Properties', xName: 'Factor', yName: 'Regression Value',
    origin: [226, 204], x: factorTicks, y: [[322, '0.975'], [446, '0.950'], [571, '0.925'], [694, '0.900']], minorX: 35, minorY: 25,
    legend: [['Saccharose %', BLUE, 255, 222]], lines: [[BLUE, '226,752 577,208 636,208 750,212 870,216 970,216 1060,212 1150,208 1236,208']]
  },
  consistency: {
    title: 'Consistency', sub: 'All Properties', xName: 'Factor', yName: 'SEE/SEP [%]',
    origin: [226, 204], x: factorTicks, y: [[241, '110'], [334, '105'], [427, '100'], [520, '95'], [613, '90'], [703, '85']], minorX: 35, minorY: 18,
    legend: [['Saccharose %', BLUE, 255, 222]], lines: [[BLUE, '226,314 577,206 928,752 1280,458']]
  }
};

const parse = s => s.split(' ').map(p => p.split(',').map(Number));
function at(points, x) {
  for (let i = 1; i < points.length; i++) {
    const [x0, y0] = points[i - 1], [x1, y1] = points[i];
    if (x <= x1) return y0 + (y1 - y0) * (x - x0) / (x1 - x0);
  }
  return points[points.length - 1][1];
}
// Small repeatable generator, so a redraw gives the same curves.
let seed = 7;
const rnd = () => (seed = (seed * 16807) % 2147483647) / 2147483647;

function draw(box) {
  const c = charts[box.dataset.chart];
  const W = box.clientWidth, H = box.clientHeight;
  const size = c.size || [1056, 567];
  const L = 68, T = c.compact ? 34 : 39, R = W - 33, B = H - 33;
  const X = v => L + (v - c.origin[0]) * (R - L) / size[0];
  const Y = v => T + (v - c.origin[1]) * (B - T) / size[1];
  const half = v => Math.floor(v) + 0.5;
  const text = (x, y, px, s, extra = '') => `<text x="${x}" y="${y}" font-size="${px}" ${extra}>${s}</text>`;
  const mid = 'text-anchor="middle"';
  const tick = c.compact ? 8 : 10;
  seed = 7;
  let s = `<rect x="${L}" y="${T}" width="${R - L}" height="${B - T}" fill="#fff"/>`;

  let grid = '', ticks = '';
  for (const [v, label] of c.x) {
    const x = half(X(v));
    grid += `M${x} ${T}V${B - 5}`;
    ticks += `M${x} ${B}v4`;
    s += text(Math.round(X(v)), B + (c.compact ? 10 : 12), tick, label, mid);
    if (c.minorX) for (let k = 1; k < 5; k++) {
      const m = half(X(v + k * c.minorX));
      if (m < R) ticks += `M${m} ${B}v2`;
    }
  }
  for (const [v, label] of c.y) {
    const y = half(Y(v));
    if (v !== c.zero) grid += `M${L} ${y}H${R}`;
    ticks += `M${L - 3} ${y}h3`;
    s += text(L - 4, Math.floor(y) + 3, tick, label, 'text-anchor="end"');
  }
  for (let v = c.y[0][0] % c.minorY; v < 900; v += c.minorY) {
    const y = half(Y(v));
    if (y > T && y < B - 2) ticks += `M${L - 1} ${y}h1`;
  }
  s += `<path d="${grid}" stroke="#808080" stroke-dasharray="3 3" fill="none"/><path d="${ticks}" stroke="#fff" fill="none"/>`;
  if (c.zero) s += `<path d="M${L} ${half(Y(c.zero))}H${R}" stroke="#808080"/>`;

  if (c.band) {
    const [top, low] = c.band.map(parse);
    const xs = [...new Set([...top, ...low].map(p => p[0]))].concat(Array.from({ length: 150 }, (_, i) => 230 + i * 7)).sort((a, b) => a - b);
    // The spectra crowd together in the lower part of the band.
    const count = 44;
    for (let i = 0; i <= count; i++) {
      const t = Math.pow(i / count, 0.7);
      const pts = xs.map(x => {
        const a = at(top, x), b = at(low, x);
        const j = i && i < count ? (rnd() - 0.5) * 0.05 : 0;
        return X(x).toFixed(1) + ',' + Y(a + (b - a) * (t + j)).toFixed(1);
      });
      s += `<polyline points="${pts.join(' ')}" fill="none" stroke="${LIME}"/>`;
    }
  }
  for (const [color, data] of c.lines || []) {
    let pts = parse(data);
    if (c.noise) {
      const start = pts[0][0], end = pts[pts.length - 1][0], xs = pts.map(p => p[0]);
      for (let x = Math.max(start, 320); x < end; x += 7) xs.push(x);
      const base = pts;
      pts = xs.sort((a, b) => a - b).map(x => [x, at(base, x) + (x > 320 ? (rnd() - 0.5) * c.noise * 2 : 0)]);
    }
    s += `<polyline points="${pts.map(p => X(p[0]).toFixed(1) + ',' + Y(p[1]).toFixed(1)).join(' ')}" fill="none" stroke="${color}"/>`;
  }
  for (const [color, x, y, w, h] of c.marks || []) s += `<rect x="${X(x)}" y="${Y(y)}" width="${w / 3}" height="${h / 3}" fill="${color}"/>`;
  for (const [label, color, x, y] of c.legend || []) {
    s += text(X(x), Y(y) + 2, c.compact ? 4 : 5, label, `style="fill:${color}" font-weight="bold"`);
    if (c.compact) s += color === PINK ? `<rect x="${X(240)}" y="${Y(296)}" width="4" height="4" fill="none" stroke="${color}"/>` : `<path d="M${X(245)} ${Y(311)}l2 2-2 2-2-2z" fill="none" stroke="${color}"/>`;
  }

  s += text(W / 2, 20, c.compact ? 18 : 19, c.title, mid + ' font-weight="bold"');
  s += text(W / 2, c.compact ? 32 : 36, c.compact ? 8 : 9, c.sub, mid);
  s += text((L + R) / 2 + 5, B + (c.compact ? 24 : 23), c.compact ? 8 : 10, c.xName, mid + ' font-weight="bold"');
  const cy = (T + B) / 2 - (c.compact ? 23 : 8);
  s += text(0, 0, c.compact ? 10 : 11, c.yName, `${mid} transform="translate(21 ${cy}) rotate(-90)" font-weight="${c.compact ? 'normal' : 'bold'}"`);
  box.innerHTML = `<svg viewBox="0 0 ${W} ${H}" role="img" aria-label="${c.title}">${s}</svg>`;
}
const drawAll = () => document.querySelectorAll('.chart').forEach(draw);
drawAll();
addEventListener('resize', drawAll);
```
